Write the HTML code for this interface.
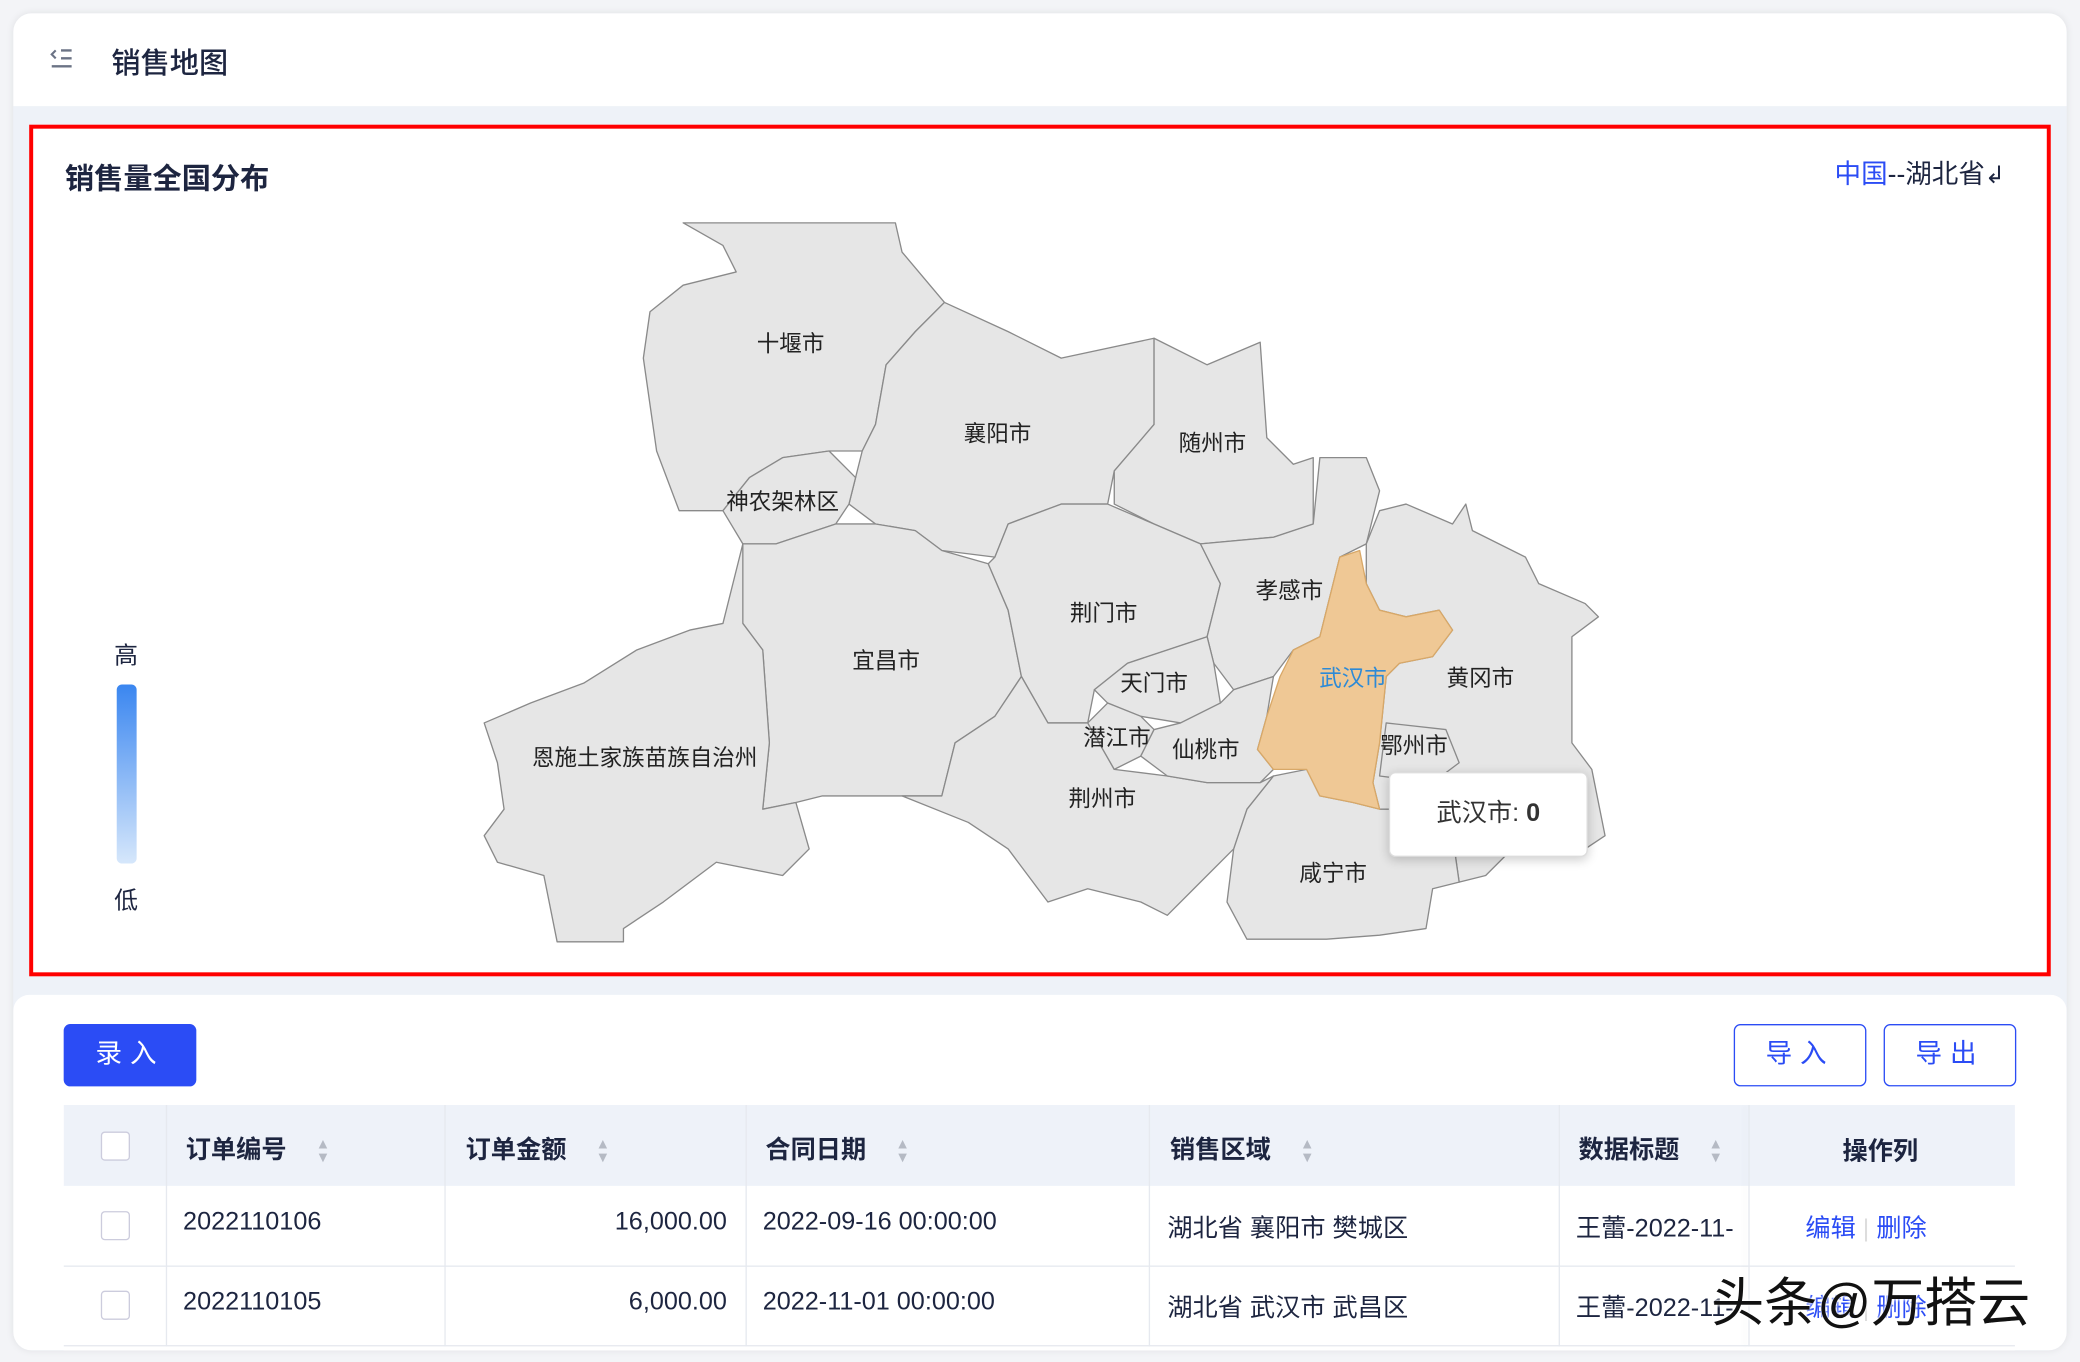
<!DOCTYPE html>
<html><head><meta charset="utf-8"><style>
html,body{margin:0;padding:0;width:2080px;height:1362px;overflow:hidden;background:#f3f4f7;}
#w{position:absolute;left:0;top:0;width:1568px;height:1027px;transform:scale(1.3265);transform-origin:0 0;font-family:"Liberation Sans","Noto Sans CJK SC",sans-serif;color:#1d2540;}
.abs{position:absolute}
.card{left:10px;top:10px;width:1548px;height:1008px;background:#eef2f8;border-radius:14px;overflow:hidden;box-shadow:0 0 6px rgba(0,0,0,.08)}
.col{position:absolute;top:0;height:182px;border-left:1px solid #e6e9ef}
.srt{display:inline-block;width:10px;margin-left:22px;vertical-align:middle;color:#b5bac4;font-size:11px;line-height:10px}
</style></head><body><div id="w">
<div class="abs card">
  <div class="abs" style="left:0;top:0;width:1548px;height:70px;background:#fff"></div>
  <div class="abs" style="left:0;top:740px;width:1548px;height:268px;background:#fff;border-radius:12px 12px 0 0"></div>
</div>
<svg class="abs" style="left:36px;top:35px" width="22" height="18"><path d="M6 3 L3 6 L6 9" stroke="#6b7385" stroke-width="1.6" fill="none"/><path d="M10 3H18M10 9H18M3 15H18" stroke="#6b7385" stroke-width="1.8"/></svg>
<div class="abs" style="left:84px;top:30px;font-size:22px;font-weight:500">销售地图</div>
<div class="abs" style="left:22px;top:94px;width:1518px;height:636px;border:3px solid #f00;background:#fff"></div>
<div class="abs" style="left:49px;top:117px;font-size:22px;font-weight:bold">销售量全国分布</div>
<div class="abs" style="left:1383px;top:115px;font-size:20px"><span style="color:#2b4cf5">中国</span>--湖北省<span style="font-size:18px">↲</span></div>
<div class="abs" style="left:86px;top:480px;font-size:18px">高</div>
<div class="abs" style="left:88px;top:516px;width:15px;height:135px;border-radius:4px;background:linear-gradient(#3a86f0,#d6e7fb)"></div>
<div class="abs" style="left:86px;top:665px;font-size:18px">低</div>
<svg class="abs" style="left:0;top:0" width="1568" height="740">
<g fill="#e6e6e6" stroke="#8a8a8a" stroke-width="1" stroke-linejoin="round">
<polygon points="515,168 675,168 680,190 712,228 690,250 668,275 660,320 650,340 625,340 590,345 565,360 545,385 512,385 495,340 485,270 490,235 515,215 555,205 545,185"/>
<polygon points="712,228 760,250 800,270 870,255 870,320 840,355 835,380 800,380 760,395 750,420 710,415 690,400 660,395 640,380 650,340 660,320 668,275 690,250"/>
<polygon points="870,255 910,275 950,258 955,330 975,350 990,345 990,395 960,405 905,410 870,395 840,380 840,355 870,320"/>
<polygon points="565,360 590,345 625,340 645,360 640,380 630,395 600,405 585,410 560,410 545,385"/>
<polygon points="585,410 600,405 630,395 660,395 690,400 710,415 745,425 760,460 770,510 750,540 720,560 710,600 680,600 620,600 600,605 575,610 580,560 575,490 560,470 560,410"/>
<polygon points="560,410 560,470 575,490 580,560 575,610 600,605 610,640 590,660 540,650 500,680 470,700 470,710 420,710 410,660 375,650 365,630 380,610 375,575 365,545 400,530 440,515 480,490 520,475 545,470"/>
<polygon points="760,395 800,380 835,380 870,395 905,410 920,440 910,480 880,490 850,500 825,520 820,545 790,545 770,510 760,460 745,425 750,420"/>
<polygon points="905,410 960,405 990,395 995,345 1030,345 1040,370 1030,410 1010,420 1000,460 995,480 975,490 960,510 930,520 915,500 910,480 920,440"/>
<polygon points="1030,410 1040,385 1060,380 1095,395 1105,380 1110,400 1150,420 1160,440 1195,455 1205,465 1185,480 1185,560 1200,580 1210,630 1195,640 1170,630 1150,620 1140,640 1120,660 1100,665 1095,630 1060,610 1040,610 1035,590 1040,560 1045,510 1055,500 1080,495 1095,475 1085,460 1060,465 1040,460 1030,440"/>
<polygon points="1045,545 1090,550 1100,575 1080,590 1040,585"/>
<polygon points="940,610 960,585 985,580 995,600 1020,605 1040,610 1060,610 1095,630 1100,665 1080,670 1075,700 1040,705 1000,708 940,708 925,680 930,640"/>
<polygon points="710,600 720,560 750,540 770,510 790,545 820,545 840,580 880,585 910,590 950,590 960,585 940,610 930,640 900,670 880,690 860,680 820,670 790,680 760,640 730,620 680,600"/>
<polygon points="850,500 880,490 910,480 915,500 920,530 890,545 860,540 835,530 825,520"/>
<polygon points="820,545 835,530 860,540 870,550 860,570 840,580"/>
<polygon points="870,550 890,545 920,530 930,520 960,510 955,540 948,565 960,580 950,590 910,590 880,585 860,570"/>
<polygon fill="#efc895" stroke="#d8a868" points="1010,420 1025,415 1030,440 1040,460 1060,465 1085,460 1095,475 1080,495 1055,500 1045,510 1040,560 1035,590 1040,610 1020,605 995,600 985,580 960,580 948,565 955,540 965,510 975,490 995,480 1000,460"/>
</g>
<g font-size="17" fill="#222" text-anchor="middle" font-family="Liberation Sans,Noto Sans CJK SC,sans-serif">
<text x="596" y="265">十堰市</text><text x="752" y="333">襄阳市</text><text x="914" y="340">随州市</text>
<text x="590" y="384">神农架林区</text><text x="668" y="504">宜昌市</text><text x="486" y="577">恩施土家族苗族自治州</text>
<text x="832" y="468">荆门市</text><text x="972" y="451">孝感市</text><text x="1020" y="517" fill="#2d8ad6">武汉市</text>
<text x="1116" y="517">黄冈市</text><text x="870" y="521">天门市</text><text x="842" y="562">潜江市</text>
<text x="909" y="571">仙桃市</text><text x="1066" y="568">鄂州市</text><text x="831" y="608">荆州市</text><text x="1005" y="664">咸宁市</text>
</g></svg>
<div class="abs" style="left:1047px;top:582px;width:148px;height:62px;background:#fff;border:1px solid #ddd;border-radius:5px;box-shadow:0 2px 8px rgba(0,0,0,.2);font-size:19px;line-height:62px;text-align:center;color:#333">武汉市: <b>0</b></div>
<div class="abs" style="left:48px;top:772px;width:100px;height:47px;background:#2b4cf5;border-radius:5px;color:#fff;font-size:20px;line-height:47px;text-align:center;letter-spacing:6px">录入</div>
<div class="abs" style="left:1307px;top:772px;width:98px;height:45px;border:1.5px solid #2b4cf5;border-radius:5px;color:#2b4cf5;font-size:20px;line-height:45px;text-align:center;letter-spacing:6px">导入</div>
<div class="abs" style="left:1420px;top:772px;width:98px;height:45px;border:1.5px solid #2b4cf5;border-radius:5px;color:#2b4cf5;font-size:20px;line-height:45px;text-align:center;letter-spacing:6px">导出</div>
<div class="abs" style="left:48px;top:833px;width:1471px;height:185px;background:#fff;overflow:hidden;font-size:19px">
  <div class="abs" style="left:0;top:0;width:1471px;height:61px;background:#eef2f9"></div>
  <div class="abs" style="left:0;top:121px;width:1471px;height:1px;background:#e6e9ef"></div>
  <div class="abs" style="left:0;top:181px;width:1471px;height:1px;background:#e6e9ef"></div>
  <div class="col" style="left:77px"></div><div class="col" style="left:287px"></div><div class="col" style="left:514px"></div>
  <div class="col" style="left:818px"></div><div class="col" style="left:1127px"></div><div class="col" style="left:1270px;box-shadow:-3px 0 4px rgba(0,0,0,.06)"></div>
  <div class="abs" style="left:28px;top:20px;width:20px;height:20px;border:1px solid #ccd;border-radius:3px;background:#fff"></div>
  <div class="abs" style="left:28px;top:80px;width:20px;height:20px;border:1px solid #ccd;border-radius:3px"></div>
  <div class="abs" style="left:28px;top:140px;width:20px;height:20px;border:1px solid #ccd;border-radius:3px"></div>
  <div class="abs" style="left:92px;top:19px;font-weight:bold">订单编号<span class="srt">▲<br>▼</span></div>
  <div class="abs" style="left:303px;top:19px;font-weight:bold">订单金额<span class="srt">▲<br>▼</span></div>
  <div class="abs" style="left:529px;top:19px;font-weight:bold">合同日期<span class="srt">▲<br>▼</span></div>
  <div class="abs" style="left:834px;top:19px;font-weight:bold">销售区域<span class="srt">▲<br>▼</span></div>
  <div class="abs" style="left:1142px;top:19px;font-weight:bold">数据标题<span class="srt">▲<br>▼</span></div>
  <div class="abs" style="left:1341px;top:20px;font-weight:bold">操作列</div>
  <div class="abs" style="left:90px;top:78px">2022110106</div>
  <div class="abs" style="left:300px;top:78px;width:200px;text-align:right">16,000.00</div>
  <div class="abs" style="left:527px;top:78px">2022-09-16 00:00:00</div>
  <div class="abs" style="left:832px;top:78px">湖北省 襄阳市 樊城区</div>
  <div class="abs" style="left:1140px;top:78px;width:130px;overflow:hidden;white-space:nowrap">王蕾-2022-11-</div>
  <div class="abs" style="left:1313px;top:78px;color:#2b4cf5">编辑 <span style="color:#ddd">|</span> 删除</div>
  <div class="abs" style="left:90px;top:138px">2022110105</div>
  <div class="abs" style="left:300px;top:138px;width:200px;text-align:right">6,000.00</div>
  <div class="abs" style="left:527px;top:138px">2022-11-01 00:00:00</div>
  <div class="abs" style="left:832px;top:138px">湖北省 武汉市 武昌区</div>
  <div class="abs" style="left:1140px;top:138px;width:130px;overflow:hidden;white-space:nowrap">王蕾-2022-11-</div>
  <div class="abs" style="left:1313px;top:138px;color:#2b4cf5">编辑 <span style="color:#ddd">|</span> 删除</div>
</div>
<div class="abs" style="left:1290px;top:950px;font-size:40px;color:#111;text-shadow:0 0 3px #fff,0 0 3px #fff">头条@万搭云</div>
</div></body></html>
